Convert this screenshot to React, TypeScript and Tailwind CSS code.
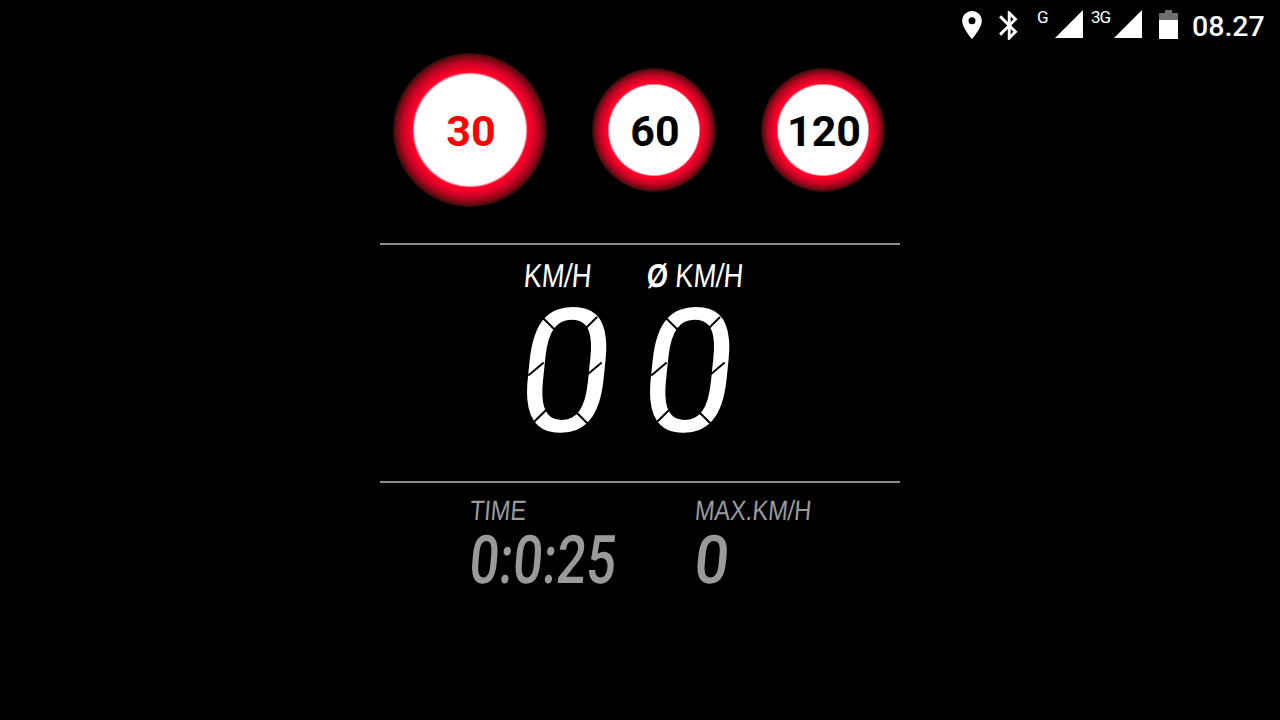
const roboto = "font-['Roboto',sans-serif]";

function StatusBar() {
  return (
    <div className={`flex h-[50px] items-start justify-end pr-4 text-white ${roboto}`}>
      <svg viewBox="5 2 14 20" className="mt-[11px] h-[28px] w-[20px] fill-white">
        <path d="M12 2C8.13 2 5 5.13 5 9c0 5.25 7 13 7 13s7-7.75 7-13c0-3.87-3.13-7-7-7zm0 9.5a2.5 2.5 0 1 1 0-5 2.5 2.5 0 0 1 0 5z" />
      </svg>
      <svg viewBox="5 2 13 20" className="ml-[17px] mt-[11px] h-[29px] w-[19px] fill-white">
        <path d="M17.71 7.71L12 2h-1v7.59L6.41 5 5 6.41 10.59 12 5 17.59 6.41 19 11 14.41V22h1l5.71-5.71-4.3-4.29 4.3-4.29zM13 5.83l1.88 1.88L13 9.59V5.83zm1.88 10.46L13 18.17v-3.76l1.88 1.88z" />
      </svg>
      <span className="ml-[19px] mt-[8px] w-[9px] text-[17px] leading-[18px]">G</span>
      <svg viewBox="0 0 28 28" className="ml-[9px] mt-[10px] h-[28px] w-[28px] fill-white">
        <polygon points="28,0 28,28 0,28" />
      </svg>
      <span className="ml-[8px] mt-[8px] w-[18px] text-[17px] leading-[18px] tracking-[-1px]">3G</span>
      <svg viewBox="0 0 28 28" className="ml-[5px] mt-[10px] h-[28px] w-[28px] fill-white">
        <polygon points="28,0 28,28 0,28" />
      </svg>
      <svg viewBox="0 0 19 29" className="ml-[17px] mt-[10px] h-[29px] w-[19px]">
        <path d="M6 0h7v3h6v7H0V3h6z" fill="#6e6e6e" />
        <rect y="10" width="19" height="19" fill="#fff" />
      </svg>
      <span className="ml-[14px] mt-[10px] w-[72px] whitespace-nowrap text-[28.5px] font-medium leading-[34px]">08.27</span>
    </div>
  );
}

function SpeedSign({ value, large, active }: { value: number; large?: boolean; active?: boolean }) {
  return (
    <div
      className={`flex items-center justify-center rounded-full bg-[radial-gradient(closest-side,#fff_72%,#ff0028_75%,#f00028_80%,#c00424_88%,#700810_96%,#201010_100%)] pl-[2px] pt-[2px] text-[43px] font-bold leading-none ${roboto} ${
        large ? "h-[154px] w-[154px]" : "h-[124px] w-[124px]"
      } ${active ? "text-[#ff0000]" : "text-black"}`}
    >
      {value}
    </div>
  );
}

function Label({ children, className }: { children: React.ReactNode; className?: string }) {
  return (
    <span className={`inline-block origin-left -skew-x-6 whitespace-nowrap font-['Liberation_Sans',sans-serif] ${className}`}>
      {children}
    </span>
  );
}

// big readout digit, thin black cuts split the stroke into display segments
function BigDigit({ value }: { value: string }) {
  return (
    <div className="relative h-[128px] w-[84px]">
      <span className={`absolute left-[-5px] top-[-29px] inline-block origin-left -skew-x-6 scale-x-[0.98] text-[172px] leading-[190px] ${roboto}`}>
        {value}
      </span>
      <i className="absolute left-[2px] top-[62px] h-[2px] w-[20px] rotate-[-40deg] bg-black" />
      <i className="absolute left-[60px] top-[62px] h-[2px] w-[20px] rotate-[-40deg] bg-black" />
      <i className="absolute left-[15px] top-[17px] h-[2px] w-[20px] rotate-[45deg] bg-black" />
      <i className="absolute left-[56px] top-[17px] h-[2px] w-[20px] rotate-[-45deg] bg-black" />
      <i className="absolute left-[5px] top-[110px] h-[2px] w-[20px] rotate-[-45deg] bg-black" />
      <i className="absolute left-[47px] top-[110px] h-[2px] w-[20px] rotate-[45deg] bg-black" />
    </div>
  );
}

export default function App() {
  return (
    <div className="h-[720px] w-[1280px] overflow-hidden bg-black">
      <StatusBar />
      <div className="ml-[380px] w-[520px]">
        <div className="mt-[3px] flex items-center gap-[45px] pl-[13px]">
          <SpeedSign value={30} large active />
          <SpeedSign value={60} />
          <SpeedSign value={120} />
        </div>

        <div className="mt-[36px] h-[2px] bg-[#8c8c8c]" />

        <div className="mt-[13px] grid grid-cols-[123px_123px] pl-[144px] text-white">
          <div className="flex h-[35px] items-center">
            <Label className="scale-x-[0.82] text-[33px] leading-none">KM/H</Label>
          </div>
          <div className="flex h-[35px] items-center">
            <Label className="scale-x-[0.82] text-[33px] leading-none">
              <b>Ø</b> KM/H
            </Label>
          </div>
          <div className="mt-[13px]">
            <BigDigit value="0" />
          </div>
          <div className="mt-[13px]">
            <BigDigit value="0" />
          </div>
        </div>

        <div className="mt-[47px] h-[2px] bg-[#8c8c8c]" />

        <div className="mt-[13px] grid grid-cols-[225px_200px] pl-[90px] text-[#9a9a9a]">
          <div className="flex h-[30px] items-center">
            <Label className="scale-x-[0.84] text-[28px] leading-none">TIME</Label>
          </div>
          <div className="flex h-[30px] items-center">
            <Label className="scale-x-[0.84] text-[28px] leading-none">MAX.KM/H</Label>
          </div>
          <div className="mt-[9px]">
            <Label className="scale-x-[0.78] font-['Roboto',sans-serif]! text-[67px] font-medium leading-[50px]">0:0:25</Label>
          </div>
          <div className="mt-[9px]">
            <Label className="scale-x-[0.9] font-['Roboto',sans-serif]! text-[67px] font-medium leading-[50px]">0</Label>
          </div>
        </div>
      </div>
    </div>
  );
}
